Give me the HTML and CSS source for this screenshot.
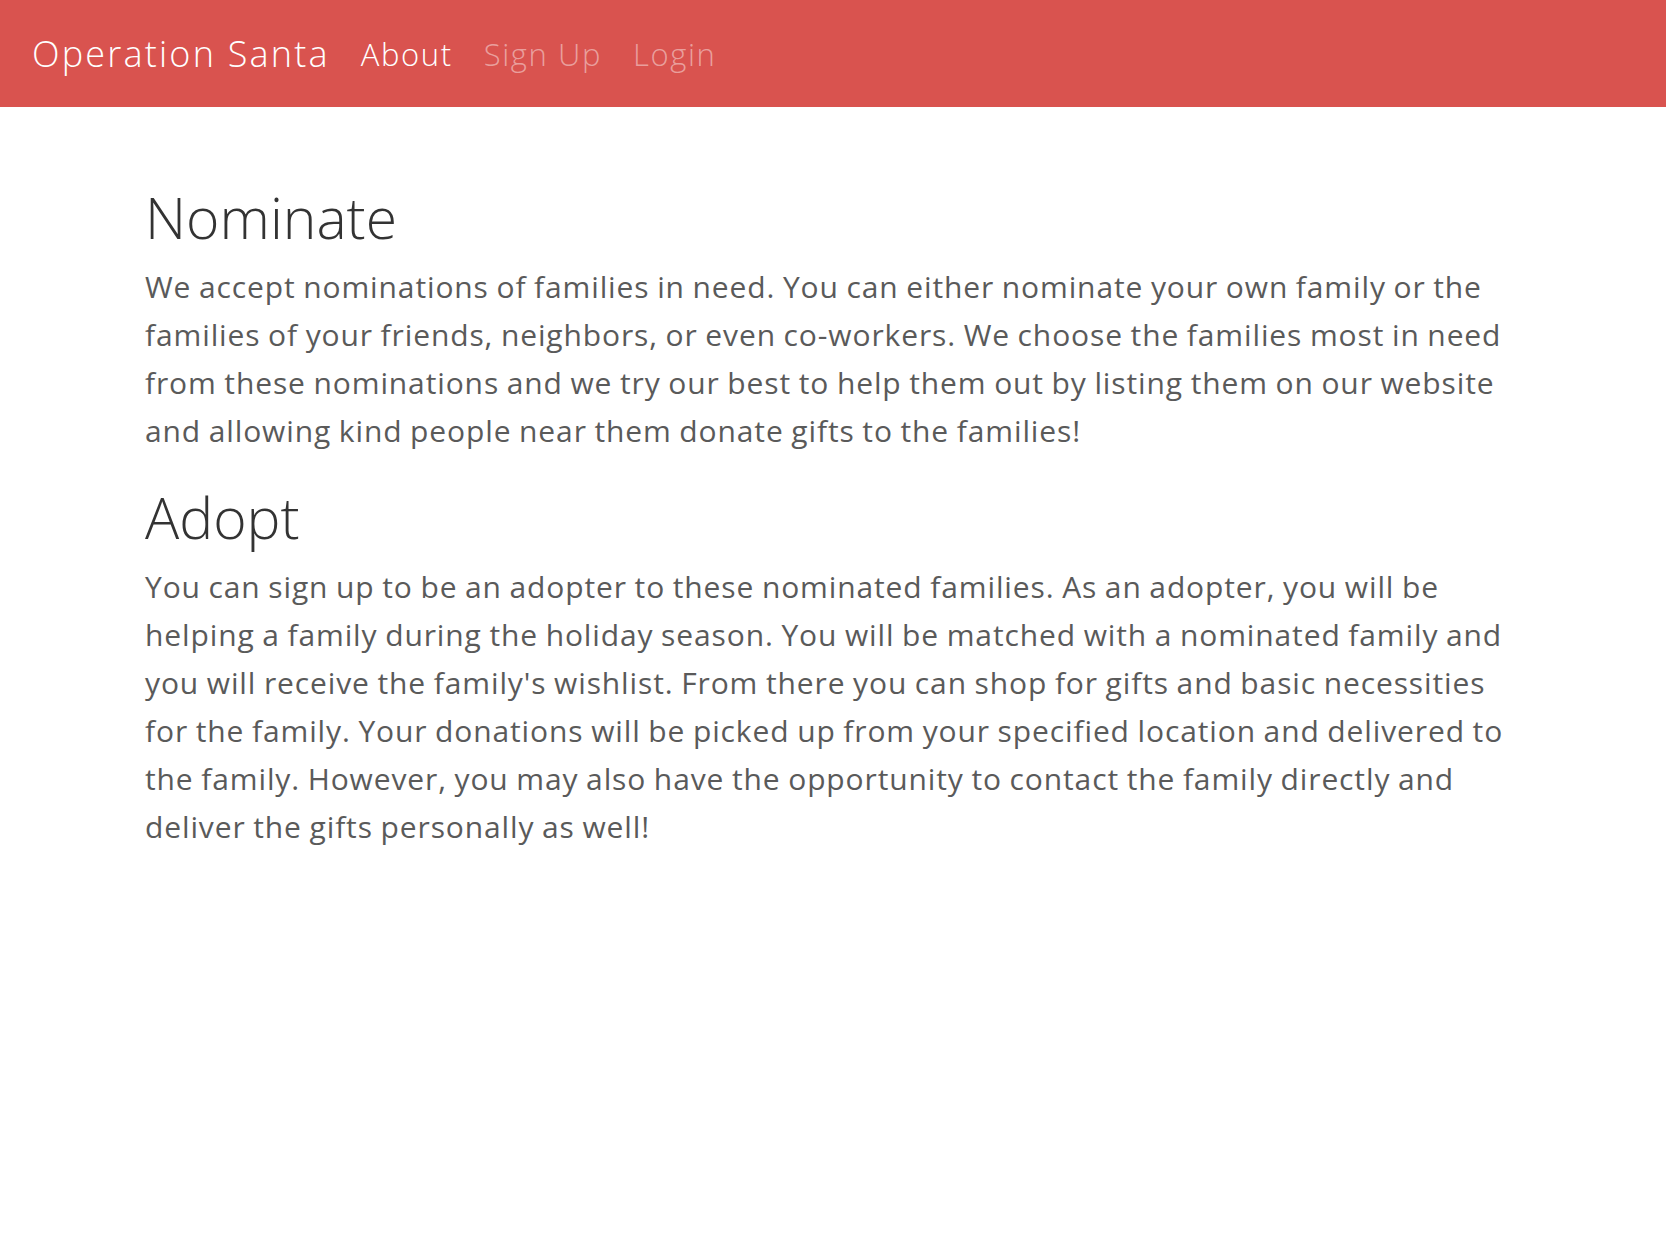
FILE: index.html
```html
<!DOCTYPE html>
<html>
<head>
<meta charset="utf-8">
<link rel="stylesheet" href="styles.css">
</head>
<body>
<nav class="navbar">
  <a class="brand" href="#">Operation Santa</a>
  <ul class="nav">
    <li><a class="active" href="#">About</a></li>
    <li><a href="#">Sign Up</a></li>
    <li><a href="#">Login</a></li>
  </ul>
</nav>
<main class="container">
  <section class="block">
    <h1>Nominate</h1>
    <p>We accept nominations of families in need. You can either nominate your own family or the families of your friends, neighbors, or even co-workers. We choose the families most in need from these nominations and we try our best to help them out by listing them on our website and allowing kind people near them donate gifts to the families!</p>
  </section>
  <section class="block">
    <h1>Adopt</h1>
    <p>You can sign up to be an adopter to these nominated families. As an adopter, you will be helping a family during the holiday season. You will be matched with a nominated family and you will receive the family's wishlist. From there you can shop for gifts and basic necessities for the family. Your donations will be picked up from your specified location and delivered to the family. However, you may also have the opportunity to contact the family directly and deliver the gifts personally as well!</p>
  </section>
</main>
</body>
</html>
```

FILE: styles.css
```css
html, body {
  margin: 0;
  padding: 0;
  background: #ffffff;
}
body {
  font-family: "Open Sans", Lato, sans-serif;
  color: #5a5a5a;
}
.navbar {
  height: 107px;
  background: #d9534f;
  display: flex;
  align-items: center;
  padding-left: 32px;
  box-sizing: border-box;
}
.brand {
  color: #ffffff;
  font-size: 36px;
  font-weight: 300;
  letter-spacing: 2.2px;
  text-decoration: none;
  margin-right: 31px;
  line-height: 1;
}
.nav {
  list-style: none;
  margin: 0;
  padding: 0;
  display: flex;
  gap: 31px;
}
.nav a {
  color: rgba(255, 255, 255, 0.45);
  font-size: 31px;
  font-weight: 300;
  letter-spacing: 1.6px;
  text-decoration: none;
}
.nav a.active {
  color: #ffffff;
}
.container {
  padding: 78px 145px 0 145px;
}
.block h1 {
  font-size: 57px;
  font-weight: 300;
  color: #333333;
  margin: 0 0 14px 0;
  line-height: 64px;
}
.block p {
  font-size: 30px;
  font-weight: 400;
  letter-spacing: 0.88px;
  word-spacing: -1px;
  line-height: 48px;
  margin: 0 0 30px 0;
}
```
